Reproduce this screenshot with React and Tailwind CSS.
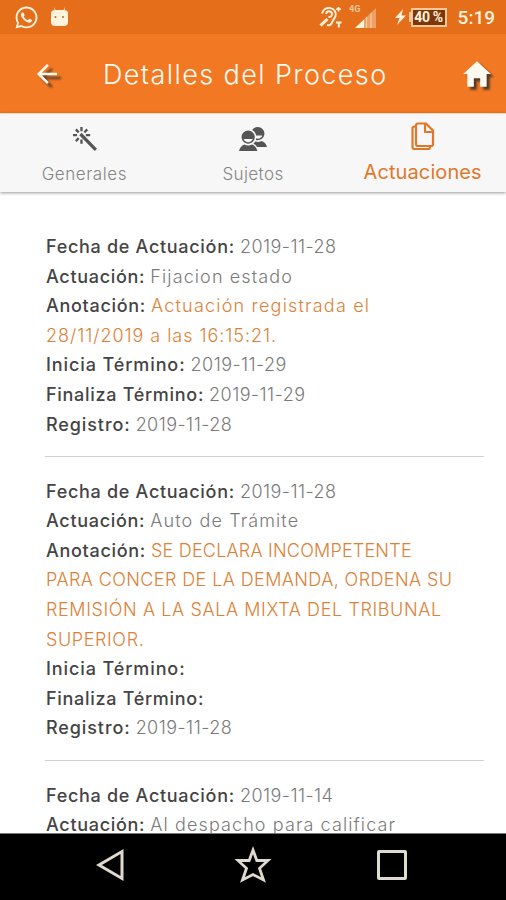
import { FaWhatsapp } from "react-icons/fa";
import { IoMdArrowBack, IoMdHome, IoMdColorWand, IoMdContacts } from "react-icons/io";

// each line: [text, letter spacing]
const entries = [
  [
    { label: "Fecha de Actuación:", lines: [["2019-11-28", "tracking-[0.45px]"]] },
    { label: "Actuación:", lines: [["Fijacion estado", "tracking-[1.1px]"]] },
    {
      label: "Anotación:",
      note: true,
      lines: [
        ["Actuación registrada el", "tracking-[1.2px]"],
        ["28/11/2019 a las 16:15:21.", "tracking-[0.95px]"],
      ],
    },
    { label: "Inicia Término:", wide: true, lines: [["2019-11-29", "tracking-[0.45px]"]] },
    { label: "Finaliza Término:", lines: [["2019-11-29", "tracking-[0.45px]"]] },
    { label: "Registro:", wide: true, lines: [["2019-11-28", "tracking-[0.45px]"]] },
  ],
  [
    { label: "Fecha de Actuación:", lines: [["2019-11-28", "tracking-[0.45px]"]] },
    { label: "Actuación:", lines: [["Auto de Trámite", "tracking-[1.1px]"]] },
    {
      label: "Anotación:",
      note: true,
      lines: [
        ["SE DECLARA INCOMPETENTE", "tracking-[0.2px]"],
        ["PARA CONCER DE LA DEMANDA, ORDENA SU", "tracking-[0.4px]"],
        ["REMISIÓN A LA SALA MIXTA DEL TRIBUNAL", "tracking-[0.6px]"],
        ["SUPERIOR.", "tracking-[0.6px]"],
      ],
    },
    { label: "Inicia Término:", wide: true, lines: [] },
    { label: "Finaliza Término:", lines: [] },
    { label: "Registro:", wide: true, lines: [["2019-11-28", "tracking-[0.45px]"]] },
  ],
  [
    { label: "Fecha de Actuación:", lines: [["2019-11-14", "tracking-[0.45px]"]] },
    { label: "Actuación:", lines: [["Al despacho para calificar", "tracking-[1.1px]"]] },
  ],
];

function StatusBar() {
  return (
    <div className="h-[34px] bg-[#e56e1a] flex items-center justify-between pl-3.5 pr-[11px] text-[#fff3dc]">
      <div className="flex items-center gap-3">
        <FaWhatsapp size={25} />
        <svg width="17" height="20" viewBox="0 0 17 20" fill="currentColor">
          <path d="M3 0l1.500 3h8L14 0l-.5 3.200Q17 3.500 17 6v9q0 4-4 4H4q-4 0-4-4V6q0-2.500 3.500-2.800z" />
          <circle cx="4.500" cy="10" r="1" fill="#c06a2a" />
          <circle cx="12" cy="10" r="1" fill="#c06a2a" />
        </svg>
      </div>
      <div className="flex items-center">
        <svg width="24" height="24" viewBox="0 0 24 24" fill="none" stroke="currentColor" strokeWidth="2">
          <path d="M3 8.500C4 4.500 7.500 2.500 11 3c4.500.7 6.500 4.500 5.500 8-.7 2.500-2.500 3.500-3.300 6-.7 2.500-2.700 4-5.200 3" />
          <path d="M7 9c.5-2 2-3 3.800-2.600 2 .5 2.700 2.300 2 4-.6 1.300-1.800 1.800-3.300 1.600" />
          <path d="M1.500 20.500l7-6.500" strokeWidth="3" />
          <path d="M19.500 2v4.500M17.200 4.200h4.600" strokeWidth="1.700" />
          <path d="M17 17.500h5.500M19.800 17.500V22.500" strokeWidth="1.900" />
        </svg>
        <svg className="ml-1.5" width="30" height="26" viewBox="0 0 30 26">
          <text x="0" y="8" fontSize="9" fontFamily="Roboto, sans-serif" fontWeight="700" fill="#f6c79c">4G</text>
          <path d="M27 4v20H6z" fill="#eea066" />
          <path d="M22 9v15M17.500 13v11" stroke="#f8cda0" strokeWidth="1.200" />
          <path d="M15 15.500V24H6z" fill="#fff3dc" />
        </svg>
        <svg className="ml-4" width="11" height="18" viewBox="0 0 11 18" fill="currentColor">
          <path d="M8 1L0 10h4.500L2 17l9-9.500H6.500z" />
        </svg>
        <div className="ml-[3px] w-[2px] h-[10px] bg-[#f6c79c]" />
        <div className="w-[36px] h-[19px] border-2 border-[#f6c79c] bg-[#7f3608] flex items-center justify-center font-[Roboto] font-bold text-[14px] leading-none whitespace-nowrap tracking-tight">40 %</div>
        <span className="ml-[11px] font-[Roboto] font-medium text-[19px] leading-none">5:19</span>
      </div>
    </div>
  );
}

function Header() {
  return (
    <div className="h-[79px] bg-[#f27823] flex items-center pl-8 pr-3 text-[#fffaf0]">
      <IoMdArrowBack size={30} className="drop-shadow-[4px_4px_1px_rgba(60,50,40,0.8)]" />
      <h1 className="ml-[41px] pt-1 text-[27px] font-light tracking-[1.4px] whitespace-nowrap">Detalles del Proceso</h1>
      <IoMdHome size={34} className="ml-auto drop-shadow-[3px_3px_1px_rgba(60,50,40,0.9)]" />
    </div>
  );
}

function Tabs() {
  return (
    <div className="h-[79px] bg-[#f7f7f7] border-t border-[#f6d8c2] grid grid-cols-3 shadow-[0_1px_3px_rgba(0,0,0,0.4)] text-[#858585] text-[17px] font-light">
      <div className="flex flex-col items-center pt-[9px]">
        <IoMdColorWand size={32} className="text-[#555] ml-0.5" />
        <span className="mt-[7px] leading-6 tracking-[0.55px]">Generales</span>
      </div>
      <div className="flex flex-col items-center pt-[9px]">
        <IoMdContacts size={32} className="text-[#555]" />
        <span className="mt-[7px] leading-6 tracking-[0.4px]">Sujetos</span>
      </div>
      <div className="flex flex-col items-center pt-2 text-[#e0772b] text-[20px] font-normal">
        <svg className="ml-0.5" width="24" height="29" viewBox="0 0 24 29" fill="none" stroke="currentColor" strokeWidth="2.200" strokeLinejoin="round">
          <path d="M7 1.500h8l7 7V22a2 2 0 0 1-2 2H7a2 2 0 0 1-2-2V3.500a2 2 0 0 1 2-2z" />
          <path d="M14 2v8h8M5 4.500H3.500a2 2 0 0 0-2 2V25a2 2 0 0 0 2 2H17a2 2 0 0 0 2-2v-1" />
        </svg>
        <span className="mt-[9px] ml-0.5 leading-6 tracking-[0.1px]">Actuaciones</span>
      </div>
    </div>
  );
}

function Entry({ rows }) {
  return (
    <div className="pb-[17px] mb-[19.5px] border-b border-[#d2d2d2]">
      {rows.map(({ label, note, wide, lines }) => (
        <div key={label} className={`pl-px whitespace-nowrap ${note ? "text-[#dc8136]" : "text-[#7a7a7a]"}`}>
          <span className={`font-medium text-[#444] ${wide ? "tracking-[0.9px]" : "tracking-[0.7px]"}`}>{label}</span>{" "}
          {lines.map(([text, tracking], i) => (
            <span key={text} className={`${tracking} ${i > 0 ? "block" : ""}`}>{text}</span>
          ))}
        </div>
      ))}
    </div>
  );
}

function NavBar() {
  return (
    <div className="h-[67px] shrink-0 bg-black border-t border-[#777] flex items-center justify-between pl-[95px] pr-[99px] pb-1">
      <svg width="30" height="34" viewBox="0 0 30 34" fill="none" stroke="#e0d9cf" strokeWidth="3">
        <path d="M27 3.500v27L4 17z" />
      </svg>
      <svg className="ml-1" width="40" height="40" viewBox="0 0 40 40" fill="none" stroke="#e0d9cf" strokeWidth="2.800">
        <path d="M20 5l3.800 10.500H35l-8.500 7.800L30.500 35 20 29.500 9.500 35l4-11.700L5 15.500h11.200z" />
      </svg>
      <div className="size-[30px] border-3 border-[#e0d9cf] rounded-[2px]" />
    </div>
  );
}

export default function App() {
  return (
    <div className="w-[506px] h-[900px] flex flex-col overflow-hidden bg-white font-[Inter,sans-serif]">
      <StatusBar />
      <Header />
      <Tabs />
      <div className="flex-1 min-h-0 overflow-hidden pl-[45px] pr-[22px] pt-[40px] text-[18px] leading-[29.6px] font-light">
        {entries.map((rows, i) => <Entry key={i} rows={rows} />)}
      </div>
      <NavBar />
    </div>
  );
}
